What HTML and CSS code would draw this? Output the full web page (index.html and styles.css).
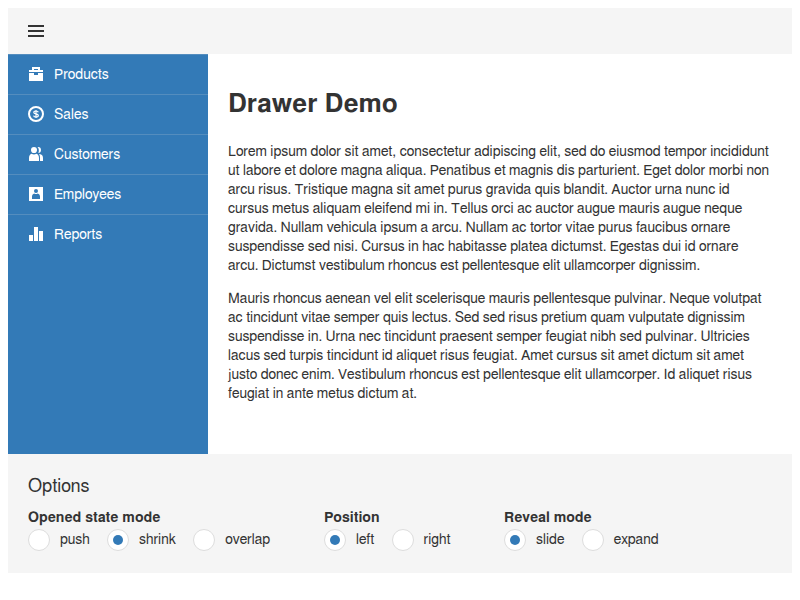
FILE: index.html
```html
<!DOCTYPE html>
<html lang="en">
<head>
<meta charset="utf-8">
<title>Drawer Demo</title>
<link rel="stylesheet" href="styles.css">
</head>
<body>
<header class="toolbar">
  <button class="menu-button" aria-label="Menu">
    <svg class="icon" viewBox="0 0 16 16"><path d="M0 2h16v2H0zM0 7h16v2H0zM0 12h16v2H0z"/></svg>
  </button>
</header>
<div class="drawer">
  <nav class="panel">
    <a class="item"><svg class="icon" viewBox="0 0 16 16"><path fill-rule="evenodd" d="M4 1h8v3h3v2H1V4h3zM6 3v1h4V3zM1 7h5v2h4V7h5v8H1z"/></svg><span class="text">Products</span></a>
    <a class="item"><svg class="icon" viewBox="0 0 16 16"><circle cx="8" cy="8" r="7" fill="none" stroke="currentColor" stroke-width="2"/><path d="M10.300 6.200C10 5.300 9.200 5 8 5C6.700 5 5.800 5.500 5.800 6.400C5.800 8.400 10.300 7.400 10.300 9.500C10.300 10.500 9.400 11 8 11C6.700 11 5.800 10.600 5.600 9.600M8 4v8" fill="none" stroke="currentColor" stroke-width="1.200"/></svg><span class="text">Sales</span></a>
    <a class="item"><svg class="icon" viewBox="0 0 16 16"><ellipse cx="6" cy="4" rx="3" ry="3.100"/><path d="M1 15v-3c0-2.500 1-3.700 2.600-4.300C5 8.600 7 8.600 8.400 7.700C10 8.300 11 9.500 11 12v3zM9.500 1C12 .8 13 2 13 4s-1 3-2.700 3C11.300 5 11 2.500 9.500 1zM11.500 8c2.500.3 3.500 2 3.500 4v3h-3v-3c0-1.800-.2-3-1-4z"/></svg><span class="text">Customers</span></a>
    <a class="item"><svg class="icon" viewBox="0 0 16 16"><path fill-rule="evenodd" d="M1 1h14v14H1zM8 3a2 2 0 1 0 0 4a2 2 0 1 0 0-4zM4 13h8v-2.500C12 8.800 11 8 9.800 7.500C8.800 8.300 7.200 8.300 6.200 7.500C5 8 4 8.800 4 10.500z"/></svg><span class="text">Employees</span></a>
    <a class="item"><svg class="icon" viewBox="0 0 16 16"><path d="M1 9h4v6H1zM6 1h4v14H6zM11 5h4v10h-4z"/></svg><span class="text">Reports</span></a>
  </nav>
  <main class="content">
    <h1>Drawer Demo</h1>
    <p>Lorem ipsum dolor sit amet, consectetur adipiscing elit, sed do eiusmod tempor incididunt ut labore et dolore magna aliqua. Penatibus et magnis dis parturient. Eget dolor morbi non arcu risus. Tristique magna sit amet purus gravida quis blandit. Auctor urna nunc id cursus metus aliquam eleifend mi in. Tellus orci ac auctor augue mauris augue neque gravida. Nullam vehicula ipsum a arcu. Nullam ac tortor vitae purus faucibus ornare suspendisse sed nisi. Cursus in hac habitasse platea dictumst. Egestas dui id ornare arcu. Dictumst vestibulum rhoncus est pellentesque elit ullamcorper dignissim.</p>
    <p>Mauris rhoncus aenean vel elit scelerisque mauris pellentesque pulvinar. Neque volutpat ac tincidunt vitae semper quis lectus. Sed sed risus pretium quam vulputate dignissim suspendisse in. Urna nec tincidunt praesent semper feugiat nibh sed pulvinar. Ultricies lacus sed turpis tincidunt id aliquet risus feugiat. Amet cursus sit amet dictum sit amet justo donec enim. Vestibulum rhoncus est pellentesque elit ullamcorper. Id aliquet risus feugiat in ante metus dictum at.</p>
  </main>
</div>
<section class="options">
  <div class="caption">Options</div>
  <div class="groups">
    <div class="group">
      <div class="label">Opened state mode</div>
      <div class="radios">
        <span class="radio"><i class="dot"></i>push</span>
        <span class="radio"><i class="dot checked"></i>shrink</span>
        <span class="radio"><i class="dot"></i>overlap</span>
      </div>
    </div>
    <div class="group">
      <div class="label">Position</div>
      <div class="radios">
        <span class="radio"><i class="dot checked"></i>left</span>
        <span class="radio"><i class="dot"></i>right</span>
      </div>
    </div>
    <div class="group">
      <div class="label">Reveal mode</div>
      <div class="radios">
        <span class="radio"><i class="dot checked"></i>slide</span>
        <span class="radio"><i class="dot"></i>expand</span>
      </div>
    </div>
  </div>
</section>
</body>
</html>
```
FILE: styles.css
```css
* { box-sizing: border-box; }
body {
  margin: 8px;
  font: 14px/19px FreeSans, "Liberation Sans", sans-serif;
  font-kerning: none;
  color: #333;
  background: #fff;
}
.icon { display: block; width: 16px; height: 16px; fill: currentColor; flex: none; }
.toolbar {
  display: flex;
  align-items: center;
  height: 46px;
  padding: 0 20px;
  background: #f5f5f5;
}
.menu-button { padding: 0; border: 0; background: none; color: #333; }
.drawer { display: flex; height: 400px; }
.panel { width: 200px; flex: none; background: #337ab7; color: #fff; }
.item {
  display: flex;
  align-items: center;
  gap: 10px;
  height: 40px;
  padding: 0 20px;
  border-top: 1px solid rgba(221, 221, 221, .2);
}
.item .icon { margin-bottom: 1px; }
.item .text { margin-top: 2px; }
.content { flex: 1; padding: 20px; }
h1 { margin: 11px 0 20px; font-size: 26px; line-height: 38px; font-weight: 700; }
p { margin: 0 0 14px; }
.options { height: 119px; padding: 21px 20px 0; background: #f5f5f5; }
.caption { font-size: 18px; line-height: 24px; }
.groups { display: flex; gap: 53.7px; margin-top: 10px; }
.label { font-weight: 700; line-height: 19px; }
.radios { display: flex; gap: 17.3px; margin-top: 1px; }
.radio { display: flex; gap: 10px; line-height: 22px; }
.dot {
  display: flex;
  align-items: center;
  justify-content: center;
  width: 22px;
  height: 22px;
  border: 1px solid #ddd;
  border-radius: 50%;
  background: #fff;
}
.checked::after {
  content: "";
  width: 10px;
  height: 10px;
  border-radius: 50%;
  background: #337ab7;
}
```
